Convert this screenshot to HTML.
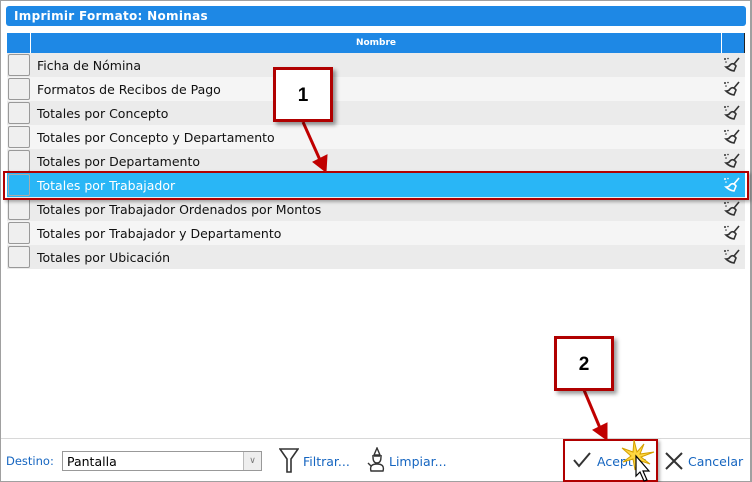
<!DOCTYPE html>
<html><head><meta charset="utf-8"><style>
*{margin:0;padding:0;box-sizing:border-box}
body{width:752px;height:482px;background:#fff;position:relative;overflow:hidden;font-family:"DejaVu Sans","Liberation Sans",sans-serif}
.frame{position:absolute;left:0;top:0;width:752px;height:482px;border:1px solid #a0a0a0;border-right:2px solid #a0a0a0}
.title{position:absolute;left:6px;top:6px;width:740px;height:20px;background:#1e88e5;border-radius:3px;color:#fff;font-weight:bold;font-size:12px;line-height:21px;padding-left:8px;letter-spacing:0.3px}
.hdr{position:absolute;top:33px;height:20px;background:#1e88e5;color:#fff;font-size:9px;font-weight:bold;text-align:center;line-height:20px}
.row{position:absolute;left:7px;width:738px;height:24px;font-size:12.5px;line-height:26px;color:#111}
.row .cb{position:absolute;left:1px;top:1px;width:22px;height:22px;border:1px solid #999;border-radius:2px;background:#efefef}
.row .t{position:absolute;left:30px;top:0}
.row svg{position:absolute;left:716px;top:4px}
.box{position:absolute;border:3px solid #b00000;background:#fff;box-shadow:3px 3px 4px rgba(0,0,0,.4);font:bold 19px "Liberation Sans",sans-serif;text-align:center}
.foot{position:absolute;left:1px;top:438px;width:749px;height:43px;border-top:1px solid #d8d8d8;background:#fff}
.lnk{position:absolute;color:#1565c0;font-size:12.5px}
</style></head><body>
<div class="frame"></div>
<div class="title">Imprimir Formato: Nominas</div>
<div class="hdr" style="left:7px;width:23px"></div>
<div class="hdr" style="left:31px;width:690px">Nombre</div>
<div class="hdr" style="left:722px;width:23px;border-right:1px solid #222"></div>

<div class="row" style="top:53px;background:#ebebeb"><div class="cb"></div><div class="t">Ficha de Nómina</div><svg width="18" height="16" viewBox="0 0 18 16"><g fill="#333"><circle cx="2" cy="2" r="1"/><circle cx="5" cy="1.5" r="0.8"/><circle cx="3" cy="5" r="0.8"/></g><path d="M16 1 L11 7 M7 8 Q10 5 13 9 L11 14 Q6 13 3 10 Q6 10 7 8Z" stroke="#333" stroke-width="1.6" fill="none"/></svg></div>
<div class="row" style="top:77px;background:#f5f5f5"><div class="cb"></div><div class="t">Formatos de Recibos de Pago</div><svg width="18" height="16" viewBox="0 0 18 16"><g fill="#333"><circle cx="2" cy="2" r="1"/><circle cx="5" cy="1.5" r="0.8"/><circle cx="3" cy="5" r="0.8"/></g><path d="M16 1 L11 7 M7 8 Q10 5 13 9 L11 14 Q6 13 3 10 Q6 10 7 8Z" stroke="#333" stroke-width="1.6" fill="none"/></svg></div>
<div class="row" style="top:101px;background:#ebebeb"><div class="cb"></div><div class="t">Totales por Concepto</div><svg width="18" height="16" viewBox="0 0 18 16"><g fill="#333"><circle cx="2" cy="2" r="1"/><circle cx="5" cy="1.5" r="0.8"/><circle cx="3" cy="5" r="0.8"/></g><path d="M16 1 L11 7 M7 8 Q10 5 13 9 L11 14 Q6 13 3 10 Q6 10 7 8Z" stroke="#333" stroke-width="1.6" fill="none"/></svg></div>
<div class="row" style="top:125px;background:#f5f5f5"><div class="cb"></div><div class="t">Totales por Concepto y Departamento</div><svg width="18" height="16" viewBox="0 0 18 16"><g fill="#333"><circle cx="2" cy="2" r="1"/><circle cx="5" cy="1.5" r="0.8"/><circle cx="3" cy="5" r="0.8"/></g><path d="M16 1 L11 7 M7 8 Q10 5 13 9 L11 14 Q6 13 3 10 Q6 10 7 8Z" stroke="#333" stroke-width="1.6" fill="none"/></svg></div>
<div class="row" style="top:149px;background:#ebebeb"><div class="cb"></div><div class="t">Totales por Departamento</div><svg width="18" height="16" viewBox="0 0 18 16"><g fill="#333"><circle cx="2" cy="2" r="1"/><circle cx="5" cy="1.5" r="0.8"/><circle cx="3" cy="5" r="0.8"/></g><path d="M16 1 L11 7 M7 8 Q10 5 13 9 L11 14 Q6 13 3 10 Q6 10 7 8Z" stroke="#333" stroke-width="1.6" fill="none"/></svg></div>
<div class="row" style="top:173px;background:#29b6f6;color:#fff"><div class="cb" style="background:#29b6f6;border-color:#aaa"></div><div class="t">Totales por Trabajador</div><svg width="18" height="16" viewBox="0 0 18 16"><g fill="#fff"><circle cx="2" cy="2" r="1"/><circle cx="5" cy="1.5" r="0.8"/><circle cx="3" cy="5" r="0.8"/></g><path d="M16 1 L11 7 M7 8 Q10 5 13 9 L11 14 Q6 13 3 10 Q6 10 7 8Z" stroke="#fff" stroke-width="1.6" fill="none"/></svg></div>
<div class="row" style="top:197px;background:#ebebeb"><div class="cb"></div><div class="t">Totales por Trabajador Ordenados por Montos</div><svg width="18" height="16" viewBox="0 0 18 16"><g fill="#333"><circle cx="2" cy="2" r="1"/><circle cx="5" cy="1.5" r="0.8"/><circle cx="3" cy="5" r="0.8"/></g><path d="M16 1 L11 7 M7 8 Q10 5 13 9 L11 14 Q6 13 3 10 Q6 10 7 8Z" stroke="#333" stroke-width="1.6" fill="none"/></svg></div>
<div class="row" style="top:221px;background:#f5f5f5"><div class="cb"></div><div class="t">Totales por Trabajador y Departamento</div><svg width="18" height="16" viewBox="0 0 18 16"><g fill="#333"><circle cx="2" cy="2" r="1"/><circle cx="5" cy="1.5" r="0.8"/><circle cx="3" cy="5" r="0.8"/></g><path d="M16 1 L11 7 M7 8 Q10 5 13 9 L11 14 Q6 13 3 10 Q6 10 7 8Z" stroke="#333" stroke-width="1.6" fill="none"/></svg></div>
<div class="row" style="top:245px;background:#ebebeb"><div class="cb"></div><div class="t">Totales por Ubicación</div><svg width="18" height="16" viewBox="0 0 18 16"><g fill="#333"><circle cx="2" cy="2" r="1"/><circle cx="5" cy="1.5" r="0.8"/><circle cx="3" cy="5" r="0.8"/></g><path d="M16 1 L11 7 M7 8 Q10 5 13 9 L11 14 Q6 13 3 10 Q6 10 7 8Z" stroke="#333" stroke-width="1.6" fill="none"/></svg></div>

<div style="position:absolute;left:3px;top:171px;width:746px;height:29px;border:2px solid #b00000;box-shadow:2px 2px 3px rgba(0,0,0,.3)"></div>

<div class="foot">
 <div class="lnk" style="left:5px;top:15px;font-size:11.5px">Destino:</div>
 <div style="position:absolute;left:61px;top:12px;width:200px;height:20px;border:1px solid #999;background:#fff;font-size:12.5px;line-height:19px;padding-left:4px;color:#000">Pantalla<div style="position:absolute;right:0;top:0;width:18px;height:18px;border-left:1px solid #bbb;background:#eee;color:#777;font-size:9px;text-align:center">&#8744;</div></div>
 <svg style="position:absolute;left:278px;top:9px" width="20" height="26" viewBox="0 0 20 26"><path d="M1 1 H19 L12 11 V24 H8 V11 Z" fill="none" stroke="#333" stroke-width="1.6"/></svg>
 <div class="lnk" style="left:302px;top:15px">Filtrar...</div>
 <svg style="position:absolute;left:364px;top:8px" width="22" height="26" viewBox="0 0 22 26"><path d="M12 1 L9 8 H15 Z M7 9 H17 M8 10 Q8 16 12 16 Q16 16 16 10 M6 24 Q4 17 12 17 Q20 17 18 24 Z M3 16 L6 19" fill="none" stroke="#333" stroke-width="1.4"/></svg>
 <div class="lnk" style="left:388px;top:15px">Limpiar...</div>
 <svg style="position:absolute;left:572px;top:13px" width="18" height="16" viewBox="0 0 18 16"><path d="M1 8 L6 14 L17 1" fill="none" stroke="#333" stroke-width="2"/></svg>
 <div class="lnk" style="left:596px;top:15px">Aceptar</div>
 <svg style="position:absolute;left:664px;top:13px" width="18" height="18" viewBox="0 0 18 18"><path d="M1 1 L17 17 M17 1 L1 17" stroke="#333" stroke-width="2"/></svg>
 <div class="lnk" style="left:687px;top:15px">Cancelar</div>
</div>

<div style="position:absolute;left:563px;top:439px;width:95px;height:43px;border:2px solid #b00000;box-shadow:2px 2px 3px rgba(0,0,0,.3)"></div>
<svg style="position:absolute;left:620px;top:440px" width="40" height="42" viewBox="0 0 40 42"><path d="M14 0 L17 12 L24 4 L20 14 L34 12 L21 17 L30 24 L18 20 L15 30 L13 19 L3 22 L11 16 L2 8 L13 12 Z" fill="#ffd740" stroke="#d4a000" stroke-width="1"/><path d="M16 16 L16 36 L20 32 L24 41 L27 40 L23 31 L29 31 Z" fill="#fff" stroke="#000" stroke-width="1.2"/></svg>

<svg style="position:absolute;left:0;top:0" width="752" height="482"><g fill="#c00000" stroke="#c00000" stroke-width="3"><line x1="303" y1="122" x2="320" y2="160"/><path d="M313 162 L326 172 L327 155 Z" stroke-width="1"/><line x1="584" y1="390" x2="600" y2="428"/><path d="M593 430 L607 440 L607 423 Z" stroke-width="1"/></g></svg>

<div class="box" style="left:273px;top:67px;width:60px;height:55px;line-height:51px">1</div>
<div class="box" style="left:554px;top:336px;width:60px;height:55px;line-height:51px">2</div>
</body></html>
